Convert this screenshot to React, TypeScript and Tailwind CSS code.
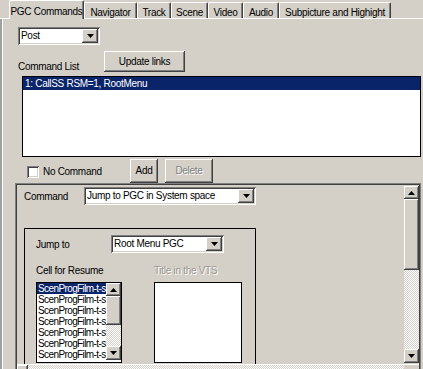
import React from "react";

// classic 3D edges
const raised =
  "shadow-[inset_-1px_-1px_#404040,inset_1px_1px_#ffffff,inset_-2px_-2px_#808080,inset_2px_2px_#d4d0c8]";
const sunken =
  "shadow-[inset_1px_1px_#808080,inset_-1px_-1px_#ffffff,inset_2px_2px_#404040,inset_-2px_-2px_#d4d0c8]";
const dither =
  "bg-[repeating-conic-gradient(#ffffff_0_25%,#d4d0c8_0_50%)] bg-[length:2px_2px]";

const Arrow = ({ up = false }: { up?: boolean }) => (
  <svg width="7" height="4" viewBox="0 0 7 4" className={up ? "rotate-180" : ""}>
    <polygon points="0,0 7,0 3.5,4" fill="#000" />
  </svg>
);

const ArrowButton = ({ up = false, className = "" }: { up?: boolean; className?: string }) => (
  <div className={`flex shrink-0 items-center justify-center bg-[#d4d0c8] ${raised} ${className}`}>
    <Arrow up={up} />
  </div>
);

const Select = ({ value, className = "" }: { value: string; className?: string }) => (
  <div className={`flex h-[18px] shrink-0 bg-white p-[2px] ${sunken} ${className}`}>
    <span className="flex-1 truncate pl-[1px] leading-[14px]">{value}</span>
    <ArrowButton className="w-[16px]" />
  </div>
);

const Button = ({
  label,
  disabled = false,
  className = "",
}: {
  label: string;
  disabled?: boolean;
  className?: string;
}) => (
  <div
    className={`flex shrink-0 items-center justify-center bg-[#d4d0c8] ${raised} ${className} ${
      disabled ? "text-[#808080] [text-shadow:1px_1px_#ffffff]" : "text-black"
    }`}
  >
    {label}
  </div>
);

const VScroll = ({ thumb, track }: { thumb: number; track: number }) => (
  <div className="flex w-[15px] shrink-0 flex-col">
    <ArrowButton up className="h-[13px]" />
    <div className={`shrink-0 bg-[#d4d0c8] ${raised}`} style={{ height: thumb }} />
    <div className={`shrink-0 ${dither}`} style={{ height: track }} />
    <ArrowButton className="h-[14px]" />
  </div>
);

const tabs = [
  { label: "Navigator", w: 53 },
  { label: "Track", w: 34 },
  { label: "Scene", w: 37 },
  { label: "Video", w: 35 },
  { label: "Audio", w: 36 },
  { label: "Subpicture and Highight", w: 112 },
];

const cells = Array.from({ length: 7 }, () => "ScenProgFilm-t-s");

export default function App() {
  return (
    <div className="relative h-[369px] w-[423px] overflow-hidden whitespace-nowrap bg-[#d4d0c8] font-['Liberation_Sans',sans-serif] text-[10px] tracking-[-0.3px] text-black">
      {/* Tab strip */}
      <div className="flex h-[18px] items-end pl-[9px]">
        <div className="relative z-10 -mb-px flex h-[19px] w-[75px] items-start justify-center rounded-t-[2px] border-l border-t border-r border-white border-r-[#404040] bg-[#d4d0c8] pt-[3px] shadow-[inset_-1px_0_#808080]">
          PGC Commands
        </div>
        {tabs.map((t) => (
          <div
            key={t.label}
            className="flex h-[16px] shrink-0 items-start justify-center rounded-t-[2px] border-l border-t border-r border-white border-r-[#404040] pt-[2px] shadow-[inset_-1px_0_#808080]"
            style={{ width: t.w }}
          >
            {t.label}
          </div>
        ))}
      </div>

      {/* Panel */}
      <div className="flex flex-col border-t border-white shadow-[inset_2px_0_#a0a0a0,inset_3px_0_#ffffff]">
        <Select value="Post" className="ml-[18px] mt-[8px] w-[82px]" />

        <div className="mt-[6px] flex shrink-0 items-end">
          <span className="ml-[18px] w-[86px] leading-[13px]">Command List</span>
          <Button label="Update links" className="mb-[1px] h-[21px] w-[81px]" />
        </div>

        <div className="ml-[22px] mt-[3px] h-[81px] w-[399px] shrink-0 border border-black bg-white">
          <div className="h-[13px] bg-[#0a246a] pl-[2px] leading-[13px] text-white">
            1: CallSS RSM=1, RootMenu
          </div>
        </div>

        <div className="mt-[1px] flex h-[25px] shrink-0 items-center">
          <div className={`ml-[27px] mt-[2px] h-[12px] w-[12px] bg-white ${sunken}`} />
          <span className="ml-[4px] w-[87px] pt-[2px]">No Command</span>
          <Button label="Add" className="h-[24px] w-[28px]" />
          <Button label="Delete" disabled className="ml-[7px] h-[24px] w-[48px]" />
        </div>

        {/* Scrolling command area */}
        <div className="ml-[15px] flex h-[200px] w-[406px] shrink-0 flex-col p-[2px] shadow-[inset_0_0_0_1px_#808080,inset_0_0_0_2px_#404040]">
          <div className="flex h-[179px] shrink-0">
            <div className="flex flex-1 flex-col overflow-hidden pl-[7px] pt-[2px]">
              <div className="flex items-center">
                <span className="w-[60px]">Command</span>
                <Select value="Jump to PGC in System space" className="w-[172px]" />
              </div>

              <div className="mt-[23px] w-[232px] flex-1 border-x border-t border-black pl-[11px]">
                <div className="mt-[6px] flex items-center">
                  <span className="w-[75px]">Jump to</span>
                  <Select value="Root Menu PGC" className="w-[113px]" />
                </div>

                <div className="mt-[11px] flex">
                  <div className="flex w-[86px] flex-col">
                    <span className="leading-[13px]">Cell for Resume</span>
                    <div className="mt-[5px] flex h-[81px] shrink-0 border border-black bg-white">
                      <div className="flex-1 overflow-hidden leading-[11px] tracking-[-0.6px]">
                        {cells.map((c, i) => (
                          <div
                            key={i}
                            className={`h-[11px] overflow-hidden pl-[1px] ${
                              i === 0 ? "bg-[#0a246a] text-white" : ""
                            }`}
                          >
                            {c}
                          </div>
                        ))}
                      </div>
                      <VScroll thumb={29} track={21} />
                    </div>
                  </div>
                  <div className="ml-[32px] flex w-[88px] flex-col">
                    <span className="leading-[13px] text-[#9a9890] [text-shadow:1px_1px_#ffffff]">
                      Title in the VTS
                    </span>
                    <div className="mt-[5px] h-[81px] shrink-0 border border-black bg-white" />
                  </div>
                </div>
              </div>
            </div>
            <div className="pt-px">
              <VScroll thumb={71} track={79} />
            </div>
          </div>
          <div className="flex h-[16px] shrink-0 border-t border-white">
            <div className={`w-[11px] bg-[#d4d0c8] ${raised}`} />
            <div className={`flex-1 ${dither}`} />
            <div className="w-[15px] bg-[#d4d0c8]" />
          </div>
        </div>
      </div>
    </div>
  );
}
